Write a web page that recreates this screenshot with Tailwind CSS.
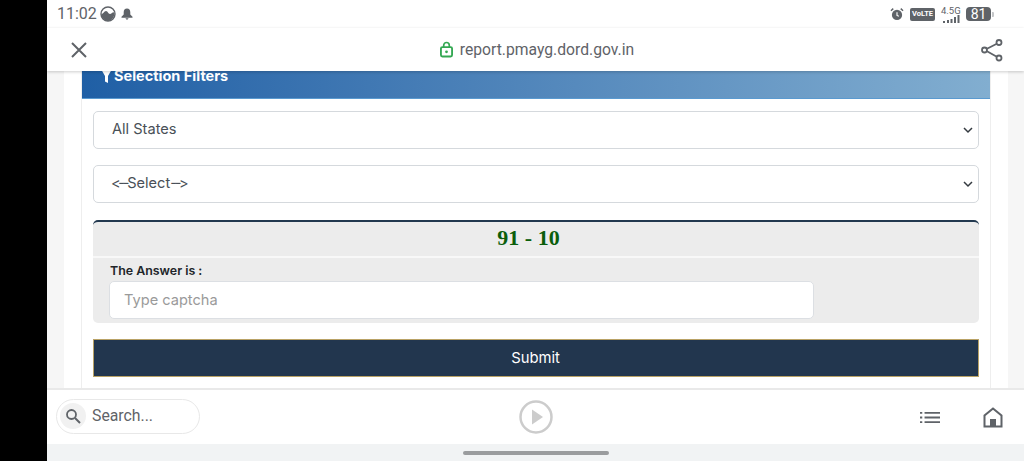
<!DOCTYPE html>
<html>
<head>
<meta charset="utf-8">
<script src="https://cdn.jsdelivr.net/npm/@tailwindcss/browser@4"></script>
</head>
<body class="overflow-hidden bg-black">
<div class="flex h-[461px] w-[1024px] font-['Roboto',sans-serif]">
  <div class="w-[47px] shrink-0 bg-black"></div>
  <div class="flex min-w-0 flex-1 flex-col bg-white">
    <!-- status bar -->
    <div class="flex h-[28px] shrink-0 items-center justify-between pl-[10px] pr-[30px] text-[#5f6368]">
      <div class="flex items-center">
        <span class="text-[16px] leading-none">11:02</span>
        <svg class="ml-[3px]" width="16" height="16" viewBox="0 0 16 16"><circle cx="8" cy="8" r="7" fill="none" stroke="#5f6368" stroke-width="1.4"/><path d="M1.500 8c2 0 2.500-3 4.500-3s2 3 4 3 3-3 4.500-1c0 4-3 8-6.500 8s-6.500-3-6.500-7z" fill="#5f6368"/></svg>
        <svg class="ml-[5px]" width="12" height="12" viewBox="0 0 12 12"><path d="M6 .5c2.200 0 3.300 1.600 3.300 3.700V6.500L11.500 8.800V9.800H.5V8.800L2.700 6.500V4.200C2.700 2.100 3.800.5 6 .5z M4.300 10.300h3.400L6 12z" fill="#5f6368"/></svg>
      </div>
      <div class="flex items-center">
        <svg width="14" height="15" viewBox="0 0 15 15"><circle cx="7.500" cy="8" r="5.500" fill="#5f6368"/><path d="M7.500 5v3.500l2 1" fill="none" stroke="#fff" stroke-width="1.200"/><path d="M1 3.500 3.500 1.200M14 3.500 11.500 1.200" stroke="#5f6368" stroke-width="1.500"/></svg>
        <span class="ml-[6px] flex h-[13px] w-[25px] items-center justify-center rounded-[2px] bg-[#5f6368] text-[7.500px] font-bold leading-none text-white">VoLTE</span>
        <div class="relative ml-[6px] h-[17px] w-[19px]">
          <span class="absolute left-0 top-0 text-[9.500px] leading-none">4.5G</span>
          <svg class="absolute bottom-0 left-0" width="19" height="8" viewBox="0 0 19 8"><path d="M2 6h2v2H2zM6 5h2v3H6zM9.500 4h2v4h-2zM13 2h2v6h-2zM16.500 0h2v8h-2z" fill="#5f6368"/></svg>
        </div>
        <div class="ml-[6px] flex items-center">
          <span class="flex h-[14px] w-[25px] items-center justify-center rounded-[4px] bg-[#5f6368] text-[14px] leading-none text-white">81</span>
          <span class="ml-[1px] h-[5px] w-[2px] rounded-r-[1px] bg-[#c4c6c8]"></span>
        </div>
      </div>
    </div>
    <!-- address bar -->
    <div class="relative z-10 flex h-[43px] shrink-0 items-center justify-between pl-[23px] pr-[20px] shadow-[0_1px_3px_rgba(0,0,0,0.2)]">
      <svg width="18" height="18" viewBox="0 0 18 18"><path d="M2 2l14 14M16 2 2 16" stroke="#5f6368" stroke-width="2" fill="none"/></svg>
      <div class="ml-[6px] flex items-center text-[#5f6368]">
        <svg width="13" height="17" viewBox="0 0 14 17"><rect x="1" y="6" width="12" height="10" rx="1.500" fill="none" stroke="#34a853" stroke-width="2"/><path d="M4 6V4a3 3 0 0 1 6 0v2" fill="none" stroke="#34a853" stroke-width="1.800"/><circle cx="7" cy="11" r="1.500" fill="#34a853"/></svg>
        <span class="ml-[7px] text-[15.700px] leading-none">report.pmayg.dord.gov.in</span>
      </div>
      <svg width="24" height="24" viewBox="0 0 24 24"><g fill="none" stroke="#5f6368" stroke-width="1.800"><circle cx="19" cy="4.500" r="2.500"/><circle cx="4.500" cy="12" r="2.500"/><circle cx="19" cy="20" r="2.500"/><path d="M7 10.700 16.800 5.700M7 13.300l9.800 5.500"/></g></svg>
    </div>
    <!-- page -->
    <div class="h-[317px] shrink-0 overflow-hidden bg-[#f6f6f6] px-[17px]">
      <div class="h-full w-[944px] bg-white px-[17px]">
        <div class="h-full border-x border-[#eeeeee] text-[#212529]">
          <div class="h-[28px] overflow-hidden border-b border-[#5a9ad0] bg-gradient-to-r from-[#1f5fa5] to-[#82aed0] pl-[19px]">
            <div class="flex h-[10px] items-center text-[14.500px] font-bold leading-none text-white">
              <svg width="11" height="14" viewBox="0 0 11 14"><path d="M0 0h11L7 7v7L4 12.500V7z" fill="#fff"/></svg>
              <span class="ml-[2px] font-['Inter',sans-serif]">Selection Filters</span>
            </div>
          </div>
          <div class="px-[11px] font-['Inter',sans-serif] [font-feature-settings:'calt'_0]">
            <div class="mt-[12px] flex h-[38px] items-center justify-between rounded-[5px] border border-[#d5d9dd] pb-[1px] pl-[18px] pr-[4px] text-[14.600px] text-[#495057]">
              <span>All States</span>
              <svg width="12" height="12" viewBox="0 0 12 12"><path d="M2 4l4 4 4-4" fill="none" stroke="#343a40" stroke-width="1.500"/></svg>
            </div>
            <div class="mt-[16px] flex h-[38px] items-center justify-between rounded-[5px] border border-[#d5d9dd] pl-[17px] pr-[4px] text-[14.600px] text-[#495057]">
              <span><span class="tracking-[-2.300px]">&lt;--</span>Select<span class="tracking-[-2.300px]">--&gt;</span></span>
              <svg width="12" height="12" viewBox="0 0 12 12"><path d="M2 4l4 4 4-4" fill="none" stroke="#343a40" stroke-width="1.500"/></svg>
            </div>
            <div class="mt-[17px] overflow-hidden rounded-[5px] border-t-2 border-[#22384f] bg-[#ececec]">
              <div class="flex h-[36px] items-center justify-center border-b-2 border-[#f8f8f8] pb-[2px] pr-[15px] font-['Liberation_Serif',serif] text-[22px] font-bold leading-none text-[#0b5e0b]">91 - 10</div>
              <div class="h-[65px] pl-[16px]">
                <div class="pl-px pt-[6px] text-[12.400px] font-semibold leading-[13px] text-[#212529]">The Answer is :</div>
                <div class="mt-[4px] flex h-[38px] w-[705px] items-center rounded-[5px] border border-[#dcdfe3] bg-white pl-[14px] pt-[1px] text-[14.600px] text-[#9a9a9a]">Type captcha</div>
              </div>
            </div>
            <div class="mt-[16px] flex h-[38px] items-center justify-center border border-[#b9a266] bg-[#22364e] pr-[1px] pt-[1px] text-[14.800px] text-white">Submit</div>
          </div>
        </div>
      </div>
    </div>
    <!-- bottom bar -->
    <div class="relative z-10 grid h-[56px] shrink-0 grid-cols-3 items-center border-t-2 border-[#e9e9e9] pl-[9px] pr-[21px]">
      <div class="mb-[2px] flex h-[35px] w-[144px] items-center rounded-full border border-[#e8e8e8] pl-[3px]">
        <span class="flex h-[26px] w-[26px] items-center justify-center rounded-full bg-[#f1f1f1]">
          <svg width="18" height="18" viewBox="0 0 18 18"><circle cx="7.500" cy="7.500" r="4.500" fill="none" stroke="#5f6368" stroke-width="1.800"/><path d="M11 11l5 5" stroke="#5f6368" stroke-width="2"/></svg>
        </span>
        <span class="ml-[6px] text-[15.800px] leading-none text-[#5f6368]">Search...</span>
      </div>
      <svg class="ml-[147px] mb-[1px]" width="34" height="34" viewBox="0 0 34 34"><circle cx="17" cy="17" r="15.500" fill="none" stroke="#cccccc" stroke-width="2.500"/><path d="M13 9.500 24 17l-11 7.500z" fill="#cccccc"/></svg>
      <div class="flex items-center justify-end">
        <svg width="20" height="13" viewBox="0 0 22 14"><path d="M0 1h2.500v2H0zM0 6h2.500v2H0zM0 11h2.500v2H0zM5 1h17v2H5zM5 6h17v2H5zM5 11h17v2H5z" fill="#5f6368"/></svg>
        <svg class="ml-[43px]" width="20" height="21" viewBox="0 0 20 21"><path d="M10 1.500 1.500 8.500V19.500h17V8.500z" fill="none" stroke="#5f6368" stroke-width="2"/><rect x="7" y="12" width="6" height="8" fill="#5f6368"/></svg>
      </div>
    </div>
    <!-- gesture bar -->
    <div class="flex h-[17px] shrink-0 items-center justify-center bg-[#f1f3f4]">
      <div class="mr-[-1px] h-[4px] w-[146px] rounded-full bg-[#9a9c9e]"></div>
    </div>
  </div>
</div>
</body>
</html>
